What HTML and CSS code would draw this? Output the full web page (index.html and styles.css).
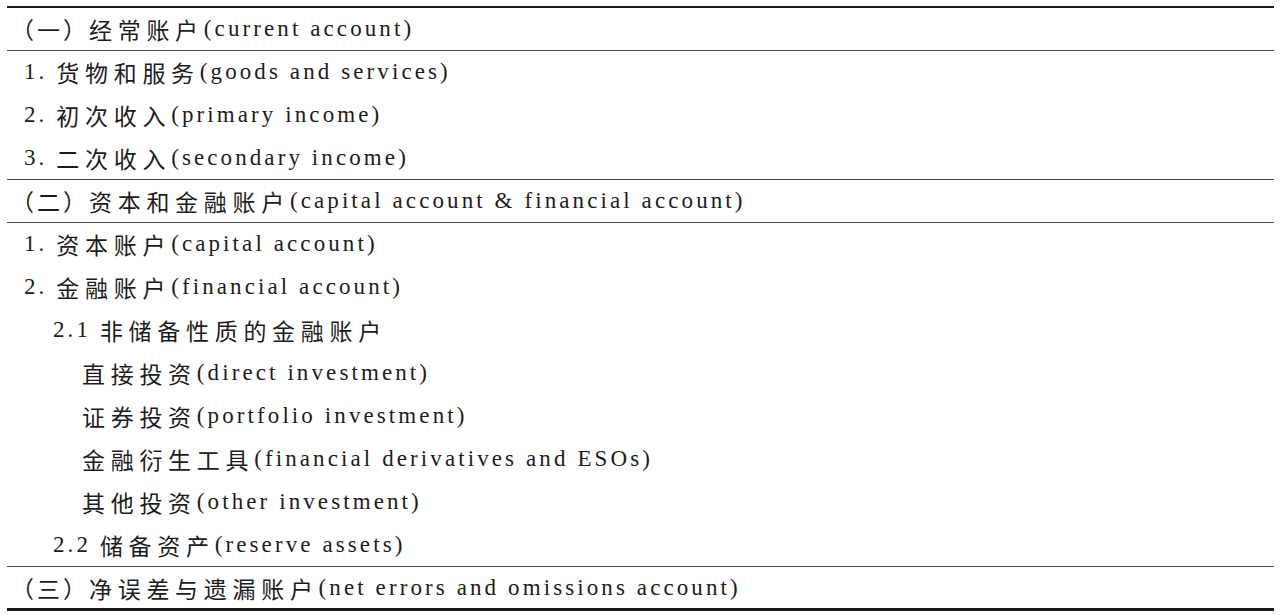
FILE: index.html
```html
<!DOCTYPE html>
<html lang="zh">
<head>
<meta charset="utf-8">
<title>国际收支平衡表结构</title>
<link rel="stylesheet" href="styles.css">
</head>
<body>
<div class="table">
  <div class="section head">
    <div class="row par"><span class="idx">（一）</span>经常账户<span class="en">(current account)</span></div>
  </div>
  <div class="section group">
    <div class="row"><span class="en">1. </span>货物和服务<span class="en">(goods and services)</span></div>
    <div class="row"><span class="en">2. </span>初次收入<span class="en">(primary income)</span></div>
    <div class="row"><span class="en">3. </span>二次收入<span class="en">(secondary income)</span></div>
  </div>
  <div class="section head">
    <div class="row par"><span class="idx">（二）</span>资本和金融账户<span class="en">(capital account &amp; financial account)</span></div>
  </div>
  <div class="section group">
    <div class="row"><span class="en">1. </span>资本账户<span class="en">(capital account)</span></div>
    <div class="row"><span class="en">2. </span>金融账户<span class="en">(financial account)</span></div>
    <div class="row l1"><span class="en">2.1 </span>非储备性质的金融账户</div>
    <div class="row l2">直接投资<span class="en">(direct investment)</span></div>
    <div class="row l2">证券投资<span class="en">(portfolio investment)</span></div>
    <div class="row l2">金融衍生工具<span class="en">(financial derivatives and ESOs)</span></div>
    <div class="row l2">其他投资<span class="en">(other investment)</span></div>
    <div class="row l1"><span class="en">2.2 </span>储备资产<span class="en">(reserve assets)</span></div>
  </div>
  <div class="section last">
    <div class="row par"><span class="idx">（三）</span>净误差与遗漏账户<span class="en">(net errors and omissions account)</span></div>
  </div>
</div>
</body>
</html>
```

FILE: styles.css
```css
html, body {
  margin: 0;
  padding: 0;
  background: #ffffff;
}

body {
  font-family: "Noto Sans CJK SC", "Liberation Serif", serif;
  font-size: 23px;
  color: #1c1c1c;
}

.table {
  margin: 6px 6px 0 7px;
  border-top: 2px solid #1a1a1a;
  display: flex;
  flex-direction: column;
}

.section {
  display: flex;
  flex-direction: column;
  border-bottom: 1px solid #4a4a4a;
}

.section.last {
  border-bottom: 3px solid #1a1a1a;
}

.row {
  height: 43px;
  display: flex;
  align-items: center;
  padding-left: 17px;
  letter-spacing: 5.7px;
  white-space: pre;
}

.head .row {
  height: 42px;
}

.last .row {
  height: 41px;
}

.group .row:first-child {
  height: 42px;
}

.row.par {
  padding-left: 4px;
}

.row.l1 {
  padding-left: 46px;
}

.row.l2 {
  padding-left: 75px;
}

.idx {
  letter-spacing: 3px;
}

.en {
  font-family: "Liberation Serif", serif;
  font-size: 23px;
  letter-spacing: 3.1px;
}
```
